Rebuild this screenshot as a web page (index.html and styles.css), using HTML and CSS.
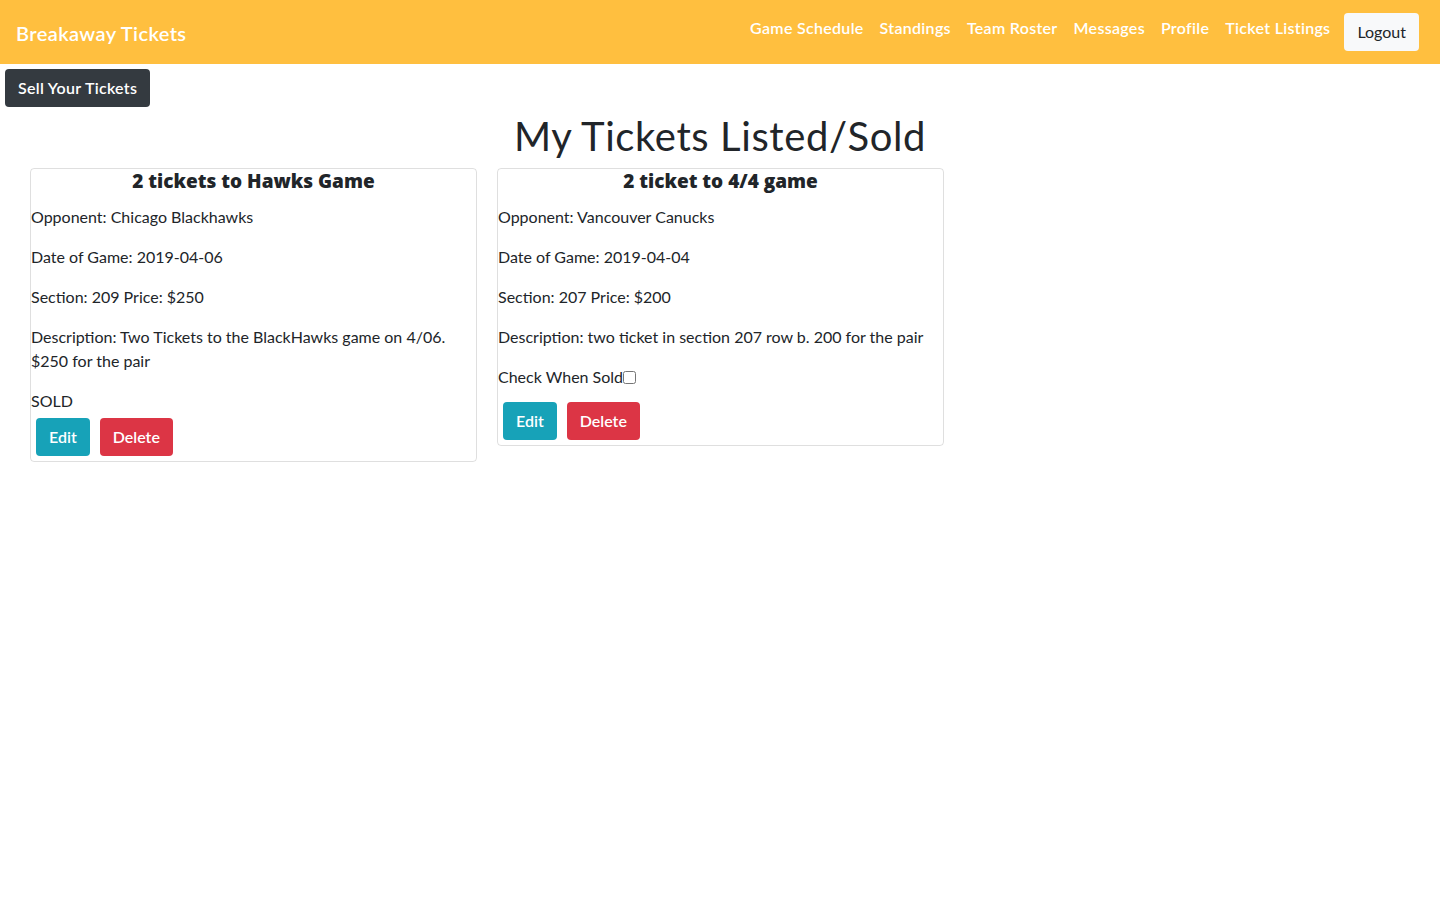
FILE: index.html
```html
<!DOCTYPE html>
<html lang="en">
<head>
<meta charset="utf-8">
<title>Breakaway Tickets</title>
<link rel="stylesheet" href="styles.css">
</head>
<body>
<nav class="navbar">
  <a class="brand" href="#">Breakaway Tickets</a>
  <div class="nav-right">
    <ul class="nav-links">
      <li><a href="#">Game Schedule</a></li>
      <li><a href="#">Standings</a></li>
      <li><a href="#">Team Roster</a></li>
      <li><a href="#">Messages</a></li>
      <li><a href="#">Profile</a></li>
      <li><a href="#">Ticket Listings</a></li>
    </ul>
    <button class="btn btn-light">Logout</button>
  </div>
</nav>
<main>
  <button class="btn btn-dark sell">Sell Your Tickets</button>
  <h1 class="page-title">My Tickets Listed/Sold</h1>
  <div class="cards">
    <div class="card">
      <h5 class="card-title">2 tickets to Hawks Game</h5>
      <p>Opponent: Chicago Blackhawks</p>
      <p>Date of Game: 2019-04-06</p>
      <p>Section: 209 Price: $250</p>
      <p>Description: Two Tickets to the BlackHawks game on 4/06. $250 for the pair</p>
      <div class="status">SOLD</div>
      <div class="actions">
        <button class="btn btn-info">Edit</button>
        <button class="btn btn-danger">Delete</button>
      </div>
    </div>
    <div class="card">
      <h5 class="card-title">2 ticket to 4/4 game</h5>
      <p>Opponent: Vancouver Canucks</p>
      <p>Date of Game: 2019-04-04</p>
      <p>Section: 207 Price: $200</p>
      <p>Description: two ticket in section 207 row b. 200 for the pair</p>
      <label class="sold-check">Check When Sold<input type="checkbox"></label>
      <div class="actions">
        <button class="btn btn-info">Edit</button>
        <button class="btn btn-danger">Delete</button>
      </div>
    </div>
  </div>
</main>
</body>
</html>
```

FILE: styles.css
```css
* { box-sizing: border-box; }
html, body { margin: 0; }
body {
  font-family: "Lato", "Open Sans", sans-serif;
  font-size: 16px;
  line-height: 1.5;
  color: #212529;
  background: #fff;
}
a { text-decoration: none; }

.navbar {
  background: #ffbf3f;
  height: 64px;
  padding: 8px 21px 8px 16px;
  display: flex;
  align-items: center;
  justify-content: space-between;
}
.brand {
  color: #fff;
  font-size: 20px;
  line-height: 30px;
  padding: 5px 0;
  font-weight: 600;
  letter-spacing: 0.4px;
  margin-top: 1px;
}
.nav-right {
  display: flex;
  align-items: center;
  height: 48px;
}
.nav-links {
  list-style: none;
  margin: 0;
  padding: 0;
  display: flex;
  align-self: flex-start;
}
.nav-links a {
  display: block;
  color: #fff;
  padding: 8px;
  line-height: 24px;
  font-weight: 600;
  letter-spacing: 0.3px;
}
.btn {
  font-family: inherit;
  font-size: 16px;
  line-height: 24px;
  padding: 6px 12px;
  border: 1px solid transparent;
  border-radius: 4px;
  cursor: pointer;
}
.btn-light {
  background: #f8f9fa;
  color: #212529;
  margin-left: 6px;
}
.btn-dark {
  background: #343a40;
  color: #fff;
  font-weight: 600;
  letter-spacing: 0.3px;
}
.btn-info {
  background: #17a2b8;
  color: #fff;
  font-weight: 600;
}
.btn-danger {
  background: #dc3545;
  color: #fff;
  font-weight: 600;
}
.sell { margin: 5px; }

.page-title {
  text-align: center;
  font-size: 40px;
  font-weight: 400;
  line-height: 48px;
  letter-spacing: 0.6px;
  margin: 0 0 8px;
}
.cards {
  display: flex;
  align-items: flex-start;
  gap: 20px;
  padding-left: 30px;
}
.card {
  width: 447px;
  border: 1px solid rgba(0,0,0,.125);
  border-radius: 4px;
}
.card-title {
  margin: 0 0 12px;
  font-family: "Open Sans", "Lato", sans-serif;
  font-size: 19px;
  line-height: 24px;
  font-weight: 800;
  letter-spacing: 0;
  text-align: center;
}
.card p { margin: 0 0 16px; }
.status { line-height: 24px; }
.sold-check {
  display: inline-block;
  margin-bottom: 8px;
}
.sold-check input {
  margin: 0;
  width: 13px;
  height: 13px;
  vertical-align: -1px;
}
.actions { display: flex; }
.actions .btn { margin: 5px; }
```
